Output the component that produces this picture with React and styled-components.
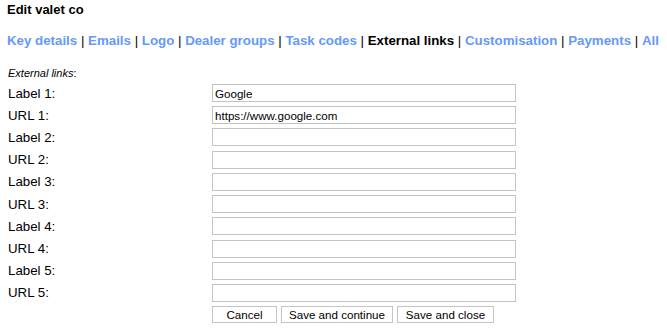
import styled, { createGlobalStyle } from "styled-components";

const Global = createGlobalStyle`
  body {
    margin: 0;
    background: #fff;
    font-family: "Liberation Sans", Arial, sans-serif;
    color: #000;
  }
`;

const links = [
  "Key details",
  "Emails",
  "Logo",
  "Dealer groups",
  "Task codes",
  "External links",
  "Customisation",
  "Payments",
  "All",
];

const fields = [
  ["Label 1:", "Google"],
  ["URL 1:", "https://www.google.com"],
  ["Label 2:", ""],
  ["URL 2:", ""],
  ["Label 3:", ""],
  ["URL 3:", ""],
  ["Label 4:", ""],
  ["URL 4:", ""],
  ["Label 5:", ""],
  ["URL 5:", ""],
];

export default function App() {
  return (
    <>
      <Global />
      <Page>
        <Title>Edit valet co</Title>
        <Nav>
          {links.map((l, i) => (
            <span key={l}>
              <NavLink $current={l === "External links"}>{l}</NavLink>
              {i < links.length - 1 && <Sep> | </Sep>}
            </span>
          ))}
        </Nav>
        <Section>
          <em>External links</em>:
        </Section>
        <Form>
          {fields.map(([label, value]) => (
            <Row key={label}>
              <Label>{label}</Label>
              <Input defaultValue={value} />
            </Row>
          ))}
          <Row>
            <span />
            <Buttons>
              <Button $w={65}>Cancel</Button>
              <Button $w={112}>Save and continue</Button>
              <Button $w={97}>Save and close</Button>
            </Buttons>
          </Row>
        </Form>
      </Page>
    </>
  );
}

const Page = styled.div`
  padding: 2px 8px 0 7px;
`;

const Title = styled.h1`
  margin: 0;
  font-size: 13px;
  font-weight: bold;
  line-height: 16px;
`;

const Nav = styled.div`
  margin-top: 15px;
  font-size: 13.3px;
  font-weight: bold;
  line-height: 16px;
  white-space: nowrap;
`;

const NavLink = styled.a`
  color: ${(p) => (p.$current ? "#000" : "#6699f8")};
  text-decoration: none;
  cursor: pointer;
`;

const Sep = styled.span`
  color: #000;
  font-weight: normal;
`;

const Section = styled.div`
  margin-top: 17px;
  padding-left: 1px;
  font-size: 11px;
  line-height: 14px;
`;

const Form = styled.div`
  margin-top: 4px;
  display: grid;
  row-gap: 4.22px;
`;

const Row = styled.div`
  display: grid;
  grid-template-columns: 205px 304px;
  align-items: center;
`;

const Label = styled.label`
  font-size: 13.3px;
  padding-left: 1px;
`;

const Input = styled.input`
  box-sizing: border-box;
  width: 304px;
  height: 18px;
  margin: 0;
  padding: 0 2px;
  border: 1px solid #c4c4c4;
  background: #fff;
  font-family: "Liberation Sans", Arial, sans-serif;
  font-size: 11.6px;
  color: #000;
  outline: none;
`;

const Buttons = styled.div`
  display: flex;
  gap: 4px;
`;

const Button = styled.button`
  box-sizing: border-box;
  width: ${(p) => p.$w}px;
  height: 17px;
  margin: 0;
  padding: 0;
  border: 1px solid #c4c4c4;
  background: #fff;
  font-family: "Liberation Sans", Arial, sans-serif;
  font-size: 11.6px;
  color: #000;
`;
